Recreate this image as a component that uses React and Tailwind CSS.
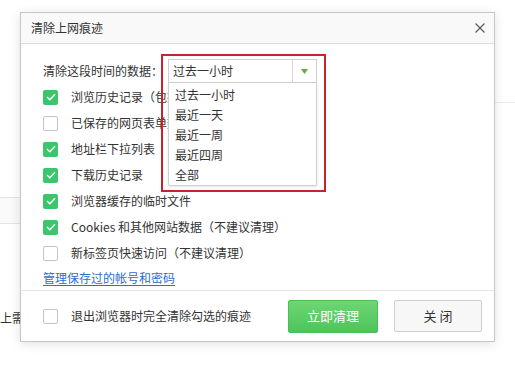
import React from 'react';

const font = { fontFamily: '"Noto Sans CJK SC", "Microsoft YaHei", sans-serif' };

const Check = ({ checked }) =>
    checked ? (
        <span className="flex h-[15px] w-[15px] shrink-0 items-center justify-center rounded-[2px] bg-[#3cc66b]">
            <svg width="10" height="8" viewBox="0 0 10 8" fill="none">
                <path d="M1 4l2.8 2.8L9 1.2" stroke="#fff" strokeWidth="1.3" />
            </svg>
        </span>
    ) : (
        <span className="h-[15px] w-[15px] shrink-0 rounded-[2px] border border-[#c4c4c4] bg-white" />
    );

const options = [
    { label: '浏览历史记录（包括收藏栏）', checked: true },
    { label: '已保存的网页表单数据', checked: false },
    { label: '地址栏下拉列表', checked: true },
    { label: '下载历史记录', checked: true },
    { label: '浏览器缓存的临时文件', checked: true },
    { label: 'Cookies 和其他网站数据（不建议清理）', checked: true },
    { label: '新标签页快速访问（不建议清理）', checked: false },
];

const ranges = ['过去一小时', '最近一天', '最近一周', '最近四周', '全部'];

const App = () => {
    return (
        <div className="relative h-[370px] w-[515px] overflow-hidden bg-white text-[12px] text-[#333] [text-spacing-trim:space-all]" style={font}>
            {/* page behind the dialog */}
            <div className="h-[102px]" />
            <div className="ml-auto w-[30px] border-t border-[#ececec]" />
            <div className="mt-[94px] h-[27px] w-[30px] border-y border-[#e3e3e3] bg-[#fafafa]" />
            <div className="mt-[85px] whitespace-nowrap leading-[18px]">上需要</div>

            {/* dialog */}
            <div className="absolute left-[20px] top-[12px] flex h-[330px] w-[475px] flex-col border border-[#c6c6c6] bg-white shadow-[0_2px_10px_rgba(0,0,0,0.12)]">
                <div className="flex h-[31px] shrink-0 items-center justify-between border-b border-[#dcdcdc] bg-[#f9f9f9] pl-[10px] pr-[9px]">
                    <span className="text-[12px] text-[#333]">清除上网痕迹</span>
                    <svg width="10" height="10" viewBox="0 0 10 10">
                        <path d="M0.5 0.5l9 9M9.5 0.5l-9 9" stroke="#555" strokeWidth="1.1" />
                    </svg>
                </div>

                <div className="flex-1 pl-[22px] pt-[15px]">
                    <div className="flex h-[24px] items-center">
                        <span className="w-[125px] whitespace-nowrap">清除这段时间的数据：</span>
                        <div className="relative">
                            <div className="flex h-[24px] w-[149px] items-center border border-[#cfcfcf] bg-white">
                                <span className="flex-1 pl-[4px]">过去一小时</span>
                                <span className="flex h-full w-[24px] items-center justify-center border-l border-[#d8d8d8]">
                                    <svg width="7" height="5" viewBox="0 0 7 5">
                                        <path d="M0 0h7L3.5 5z" fill="#55b52c" />
                                    </svg>
                                </span>
                            </div>
                            <div className="absolute left-0 top-[24px] z-10 h-[103px] w-[149px] rounded-b-[2px] border border-t-0 border-[#cfcfcf] bg-white pt-[2px] shadow-[0_1px_3px_rgba(0,0,0,0.1)]">
                                {ranges.map((r) => (
                                    <div key={r} className="flex h-[20px] items-center pl-[6px]">{r}</div>
                                ))}
                            </div>
                            <div className="pointer-events-none absolute -left-[7px] -top-[5px] z-20 h-[138px] w-[165px] border-2 border-[#c9222d]" />
                        </div>
                    </div>

                    <div className="mt-[1px]">
                        {options.map((o) => (
                            <div key={o.label} className="flex h-[26px] items-center">
                                <Check checked={o.checked} />
                                <span className="ml-[13px] whitespace-nowrap">{o.label}</span>
                            </div>
                        ))}
                    </div>
                    <a className="block h-[24px] leading-[24px] text-[#2f6ccc] underline underline-offset-2">管理保存过的帐号和密码</a>
                </div>

                <div className="flex h-[51px] shrink-0 items-center border-t border-[#e6e6e6] pl-[22px] pr-[12px]">
                    <Check checked={false} />
                    <span className="ml-[13px] flex-1">退出浏览器时完全清除勾选的痕迹</span>
                    <button className="h-[33px] w-[90px] rounded-[2px] border border-[#49bf58] bg-gradient-to-b from-[#6fd573] to-[#4cc55b] text-[13px] text-white">立即清理</button>
                    <button className="ml-[16px] h-[32px] w-[88px] rounded-[2px] border border-[#cfcfcf] bg-[#f7f7f7] text-[13px] text-[#333]">关 闭</button>
                </div>
            </div>
        </div>
    );
};

export default App;
